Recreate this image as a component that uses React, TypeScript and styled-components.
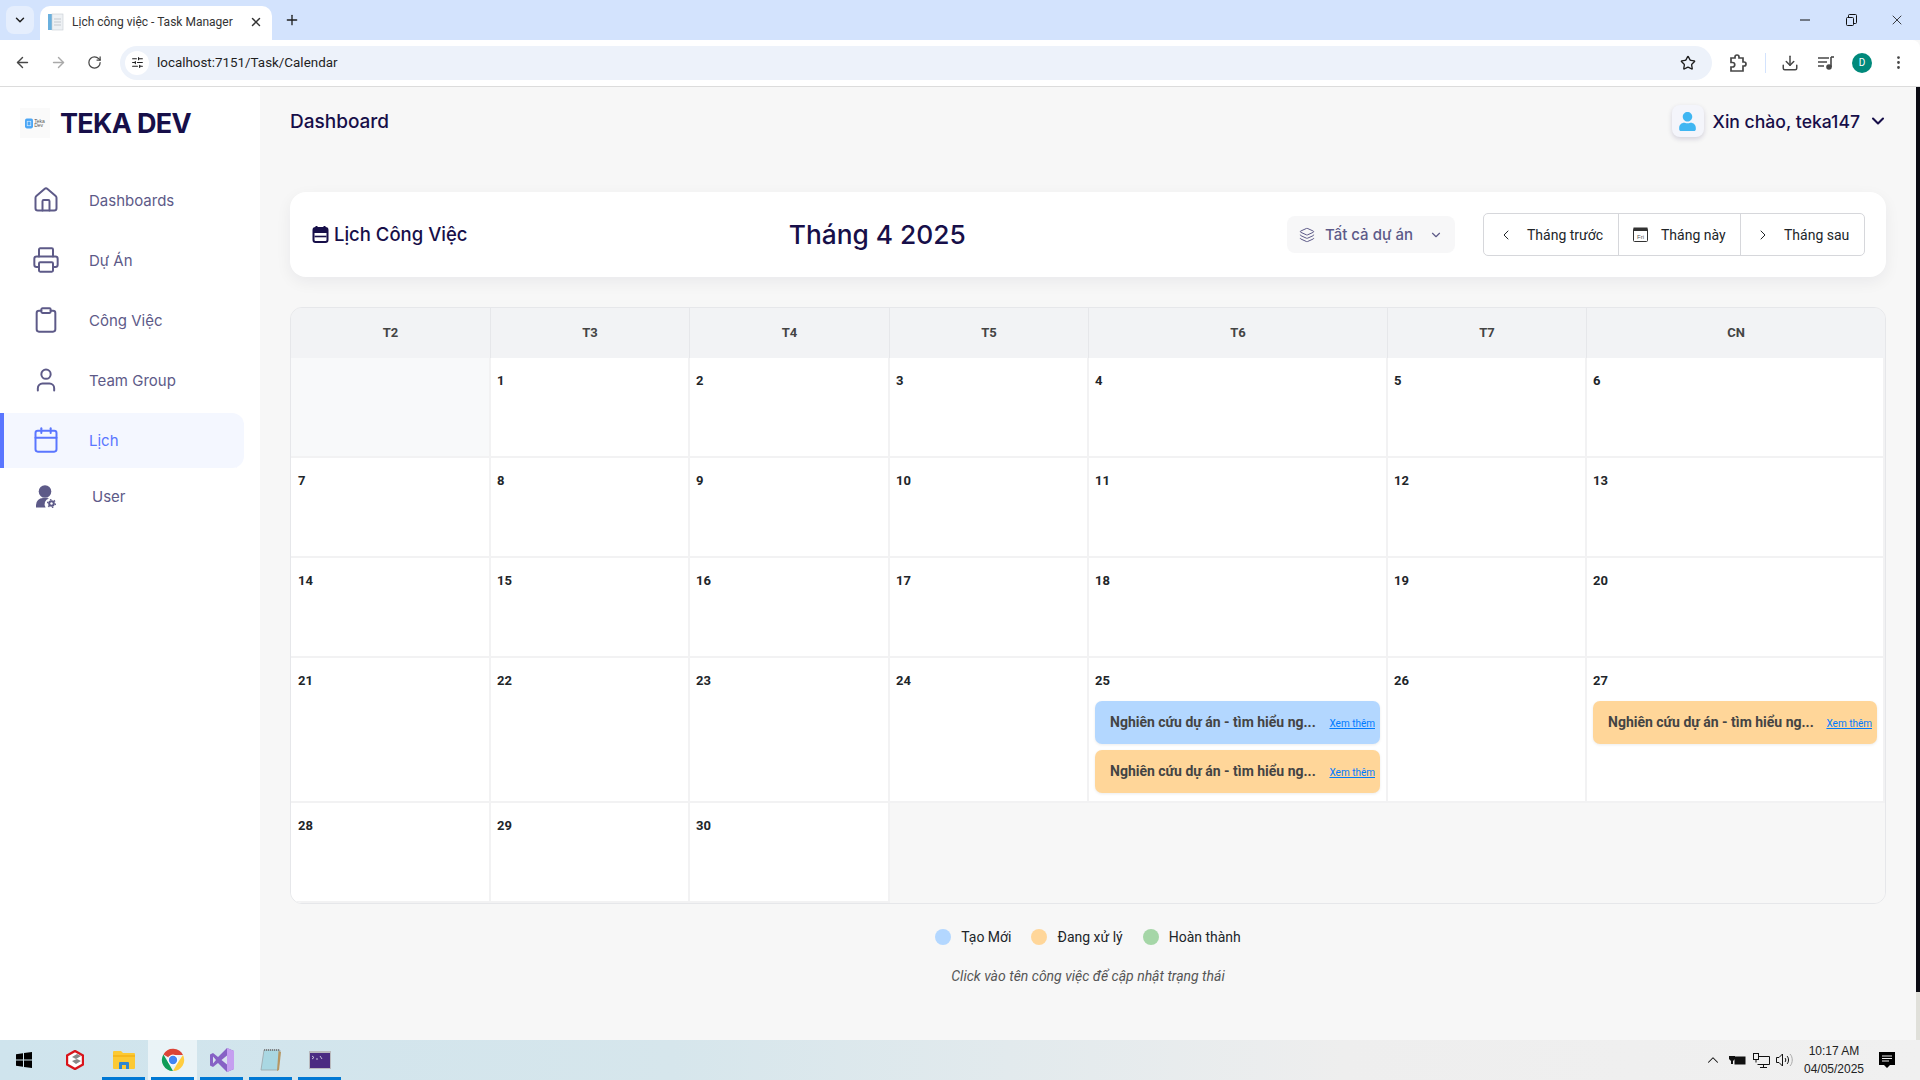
import React from "react";
import styled, { createGlobalStyle } from "styled-components";
import {
  ArrowLeft,
  ArrowRight,
  Calendar,
  ChevronDown,
  ChevronLeft,
  ChevronRight,
  ChevronUp,
  Clipboard,
  Download,
  House,
  Layers,
  MoreVertical,
  Plus,
  Printer,
  RotateCw,
  SlidersHorizontal,
  Star,
  User,
  X,
} from "lucide-react";
import { FaUser } from "react-icons/fa";

const GlobalStyle = createGlobalStyle`
  html, body {
    margin: 0;
    padding: 0;
    height: 100%;
    overflow: hidden;
  }
  * {
    box-sizing: border-box;
  }
  body {
    font-family: "Inter", "Liberation Sans", sans-serif;
  }
`;

const Screen = styled.div`
  width: 1920px;
  height: 1080px;
  display: flex;
  flex-direction: column;
  background: #f7f7f7;
`;

/* browser chrome */
const TabStrip = styled.div`
  height: 40px;
  flex: none;
  display: flex;
  align-items: flex-end;
  background: #d3e3fd;
  padding-left: 6px;
  color: #1f1f1f;
`;

const TabSearch = styled.div`
  width: 28px;
  height: 28px;
  margin: 0 6px 6px 0;
  border-radius: 8px;
  background: #e5eefd;
  display: flex;
  align-items: center;
  justify-content: center;
`;

const Tab = styled.div`
  width: 232px;
  height: 34px;
  background: #fff;
  border-radius: 10px 10px 0 0;
  display: flex;
  align-items: center;
  padding: 0 9px 2px 8px;
  font-family: "Roboto", sans-serif;
  font-size: 12px;
  color: #333;
  gap: 8px;
  span {
    flex: 1;
    white-space: nowrap;
  }
`;

const NewTab = styled.div`
  width: 40px;
  height: 34px;
  margin-bottom: 3px;
  display: flex;
  align-items: center;
  justify-content: center;
`;

const WindowControls = styled.div`
  margin-left: auto;
  height: 40px;
  display: flex;
  align-items: center;
`;

const WindowButton = styled.div`
  width: 46px;
  height: 40px;
  display: flex;
  align-items: center;
  justify-content: center;
`;

const Toolbar = styled.div`
  height: 47px;
  flex: none;
  background: #fff;
  border-bottom: 1px solid #dcdcdc;
  display: flex;
  align-items: center;
  color: #474747;
  padding: 0 0 1px 4px;
  border-top-right-radius: 8px;
`;

const ToolButton = styled.div<{ $muted?: boolean }>`
  width: 36px;
  height: 34px;
  flex: none;
  display: flex;
  align-items: center;
  justify-content: center;
  color: ${(p) => (p.$muted ? "#a9a9a9" : "#474747")};
`;

const Omnibox = styled.div`
  width: 1592px;
  height: 34px;
  flex: none;
  margin: 0 8px;
  border-radius: 17px;
  background: #edf2fa;
  display: flex;
  align-items: center;
  padding-left: 5px;
  font-family: "Roboto", sans-serif;
  font-size: 13.4px;
  color: #1f1f1f;
`;

const SiteTune = styled.div`
  width: 24px;
  height: 24px;
  border-radius: 50%;
  background: #fff;
  margin-right: 8px;
  display: flex;
  align-items: center;
  justify-content: center;
`;

const UrlText = styled.span`
  flex: 1;
`;

const StarSlot = styled.div`
  width: 20px;
  margin-right: 14px;
  display: flex;
  justify-content: center;
`;

const ToolDivider = styled.div`
  width: 1px;
  height: 20px;
  background: #d3e3fd;
  margin: 0 6px 0 9px;
  flex: none;
`;

const Avatar = styled.div`
  width: 20px;
  height: 20px;
  border-radius: 50%;
  background: #00897b;
  color: #fff;
  font-family: "Roboto", sans-serif;
  font-size: 10px;
  display: flex;
  align-items: center;
  justify-content: center;
`;

/* page */
const Page = styled.div`
  flex: 1;
  min-height: 0;
  display: flex;
`;

const Sidebar = styled.aside`
  width: 260px;
  flex: none;
  background: #fff;
  padding-top: 21px;
`;

const Brand = styled.div`
  height: 30px;
  margin: 0 0 34.5px 20px;
  display: flex;
  align-items: center;
  gap: 10px;
  font-size: 27px;
  font-weight: 700;
  letter-spacing: -0.7px;
  color: #170f49;
`;

const LogoBox = styled.div`
  width: 30px;
  height: 30px;
  background: #fafafa;
  display: flex;
  align-items: center;
  justify-content: center;
  gap: 1px;
`;

const LogoWord = styled.span`
  font-family: "Liberation Sans", sans-serif;
  font-size: 5px;
  line-height: 4.5px;
  font-weight: 400;
  letter-spacing: 0;
  color: #555;
`;

const Nav = styled.nav`
  display: flex;
  flex-direction: column;
  gap: 5px;
  padding-right: 16px;
`;

const NavItem = styled.div<{ $active?: boolean; $tight?: boolean }>`
  height: 55px;
  display: flex;
  align-items: center;
  gap: ${(p) => (p.$tight ? 36 : 29)}px;
  padding-left: ${(p) => (p.$tight ? 36 : 32)}px;
  font-size: 15px;
  color: ${(p) => (p.$active ? "#5a76ff" : "#5d5a88")};
  background: ${(p) => (p.$active ? "#f4f7ff" : "transparent")};
  border-radius: 0 12px 12px 0;
  box-shadow: ${(p) => (p.$active ? "inset 4px 0 0 #5a76ff" : "none")};
  margin-top: ${(p) => (p.$tight ? -4 : 0)}px;
  svg {
    flex: none;
  }
`;

const Main = styled.main`
  flex: 1;
  min-width: 0;
  padding: 0 30px;
`;

const TopBar = styled.header`
  height: 68px;
  margin-bottom: 37px;
  display: flex;
  align-items: center;
  justify-content: space-between;
  color: #170f49;
`;

const PageTitle = styled.h1`
  margin: 0;
  font-size: 19px;
  font-weight: 500;
`;

const UserMenu = styled.div`
  display: flex;
  align-items: center;
  font-size: 17.6px;
  font-weight: 500;
`;

const UserIcon = styled.div`
  width: 32px;
  height: 32px;
  margin-right: 9px;
  border-radius: 8px;
  background: #f4f5fb;
  box-shadow: 0 2px 5px rgba(23, 15, 73, 0.16);
  color: #3fb6f2;
  display: flex;
  align-items: center;
  justify-content: center;
`;

const UserChevron = styled.div`
  display: flex;
  margin: 0 -2px 0 8px;
`;

const Card = styled.section`
  height: 85px;
  border-radius: 16px;
  background: #fff;
  box-shadow: 0 5px 16px rgba(8, 15, 52, 0.06);
  padding: 0 21px 0 22px;
  display: flex;
  align-items: center;
  justify-content: space-between;
  color: #170f49;
`;

const CardTitle = styled.div`
  display: flex;
  align-items: center;
  gap: 5px;
  padding-bottom: 2px;
  font-size: 18.5px;
  font-weight: 500;
`;

const MonthTitle = styled.div`
  font-size: 26.3px;
  font-weight: 500;
`;

const CardActions = styled.div`
  display: flex;
  align-items: center;
  gap: 28px;
`;

const ProjectSelect = styled.div`
  width: 168px;
  height: 37px;
  border-radius: 8px;
  background: #f7f7f8;
  display: flex;
  align-items: center;
  padding-left: 12px;
  font-size: 15px;
  font-weight: 500;
  color: #5d5a88;
  span {
    flex: 1;
    margin-left: 10px;
    white-space: nowrap;
  }
  svg:last-child {
    margin-right: 12px;
  }
`;

const ButtonGroup = styled.div`
  height: 43px;
  display: flex;
  border: 1px solid #d6d7db;
  border-radius: 5px;
  font-family: "Roboto", sans-serif;
  font-size: 14px;
  color: #212529;
`;

const MonthButton = styled.div<{ $w: number }>`
  width: ${(p) => p.$w}px;
  display: flex;
  align-items: center;
  padding-left: 14px;
  gap: 13px;
  white-space: nowrap;
  & + & {
    border-left: 1px solid #d6d7db;
  }
`;

const CalendarGrid = styled.div`
  margin-top: 30px;
  display: grid;
  grid-template-columns: 200px 199px 200px 199px 299px 199px 1fr;
  border: 1px solid #e6e7ea;
  border-radius: 12px;
  overflow: hidden;
  font-family: "Roboto", sans-serif;
`;

const WeekDay = styled.div`
  height: 50px;
  padding-bottom: 1px;
  background: #f2f3f5;
  border-right: 1px solid #e6e7ea;
  display: flex;
  align-items: center;
  justify-content: center;
  font-size: 13px;
  font-weight: 700;
  color: #444;
  &:nth-child(7) {
    border-right: 0;
  }
`;

const Cell = styled.div<{ $empty?: boolean }>`
  min-height: 100px;
  padding: 15px 6px 8px;
  background: ${(p) => (p.$empty ? "#f8f9fa" : "#fff")};
  border-right: 2px solid #f2f2f3;
  border-bottom: 2px solid #f2f2f3;
  display: flex;
  flex-direction: column;
  gap: 6px;
  &:nth-child(7n + 1) {
    padding-left: 7px;
  }
`;

const DayNumber = styled.div`
  height: 22px;
  font-size: 13px;
  font-weight: 700;
  line-height: 15px;
  color: #212529;
`;

const TrailingSpace = styled.div`
  grid-column: span 4;
  background: #f7f7f7;
`;

const EventChip = styled.div<{ $color: string }>`
  height: 43px;
  border-radius: 7px;
  background: ${(p) => p.$color};
  box-shadow: 0 1px 3px rgba(0, 0, 0, 0.08);
  padding: 0 5px 2px 15px;
  display: flex;
  align-items: center;
  justify-content: space-between;
`;

const EventName = styled.span`
  font-size: 14px;
  font-weight: 700;
  color: #444;
  white-space: nowrap;
`;

const MoreLink = styled.a`
  margin-top: 3px;
  font-size: 10px;
  color: #007bff;
  text-decoration: underline;
  white-space: nowrap;
`;

const Legend = styled.div`
  margin-top: 23px;
  display: flex;
  justify-content: center;
  gap: 20px;
  font-family: "Roboto", sans-serif;
  font-size: 14px;
  line-height: 20px;
  color: #212529;
`;

const LegendItem = styled.div`
  display: flex;
  align-items: center;
  gap: 10px;
`;

const LegendDot = styled.span<{ $color: string }>`
  width: 16px;
  height: 16px;
  border-radius: 50%;
  background: ${(p) => p.$color};
`;

const Hint = styled.p`
  margin: 19px 0 0;
  text-align: center;
  font-family: "Roboto", sans-serif;
  font-size: 14px;
  font-style: italic;
  line-height: 20px;
  color: #555;
`;

const ScrollTrack = styled.div`
  width: 4px;
  flex: none;
  background: #e0e0da;
`;

const ScrollThumb = styled.div`
  height: 905px;
  background: #0c0c14;
`;

/* taskbar */
const Taskbar = styled.footer`
  height: 40px;
  flex: none;
  display: flex;
  align-items: center;
  background: linear-gradient(90deg, #cfe4ed 0%, #d6e6ec 35%, #eeeeee 70%, #f0f0f0 100%);
  color: #111;
`;

const StartSlot = styled.div`
  width: 50px;
  height: 40px;
  flex: none;
  padding-right: 2px;
  display: flex;
  align-items: center;
  justify-content: center;
`;

const TaskSlot = styled.div<{ $open?: boolean; $active?: boolean }>`
  width: 49px;
  height: 40px;
  flex: none;
  display: flex;
  align-items: center;
  justify-content: center;
  background: ${(p) => (p.$active ? "rgba(255,255,255,0.55)" : "transparent")};
  border-bottom: 3px solid transparent;
  border-image: ${(p) =>
    p.$open
      ? "linear-gradient(90deg, transparent 4px, #0078d4 4px, #0078d4 calc(100% - 4px), transparent calc(100% - 4px)) 1"
      : "none"};
  padding-top: 3px;
`;

const Tray = styled.div`
  margin-left: auto;
  display: flex;
  align-items: center;
  height: 40px;
`;

const TrayIcon = styled.div`
  width: 24px;
  display: flex;
  justify-content: center;
`;

const Clock = styled.div`
  width: 72px;
  margin: 0 9px 0 1px;
  text-align: center;
  font-family: "Liberation Sans", sans-serif;
  font-size: 12px;
  line-height: 18px;
  color: #222;
`;

const NotifySlot = styled.div`
  width: 41px;
  display: flex;
  justify-content: flex-start;
`;

const weekDays = ["T2", "T3", "T4", "T5", "T6", "T7", "CN"];

const BLUE = "#b3d7ff";
const ORANGE = "#ffd699";
const GREEN = "#a5d6a7";

const eventsByDay: Record<number, string[]> = {
  25: [BLUE, ORANGE],
  27: [ORANGE],
};

const navItems = [
  { label: "Dashboards", icon: <House size={28} strokeWidth={1.7} /> },
  { label: "Dự Án", icon: <Printer size={28} strokeWidth={1.7} /> },
  { label: "Công Việc", icon: <Clipboard size={28} strokeWidth={1.7} /> },
  { label: "Team Group", icon: <User size={28} strokeWidth={1.7} /> },
];

const FileFavicon = () => (
  <svg width="16" height="18" viewBox="0 0 16 18">
    <rect x="0" y="1" width="4" height="16" fill="#6ab0de" />
    <rect x="4" y="1" width="11" height="16" fill="#eef1f4" stroke="#c7ccd2" strokeWidth="0.6" />
    <path d="M6 6h7M6 9h7M6 12h7" stroke="#c4c9cf" />
  </svg>
);

const RestoreIcon = () => (
  <svg width="12" height="12" viewBox="0 0 12 12" fill="none" stroke="#111">
    <rect x="1.5" y="3.5" width="7" height="8" rx="1" />
    <path d="M3.5 3.5V1.5a1 1 0 0 1 1-1h6a1 1 0 0 1 1 1v7a1 1 0 0 1-1 1h-2" />
  </svg>
);

const ExtensionIcon = () => (
  <svg width="18" height="18" viewBox="0 0 18 18" fill="none" stroke="#474747" strokeWidth="1.7">
    <path d="M2 4h4V3a2 2 0 0 1 4 0v1h4v4h1a2 2 0 0 1 0 4h-1v5H2v-4h1.5a1.5 1.5 0 0 0 0-4.5H2z" />
  </svg>
);

const MediaIcon = () => (
  <svg width="18" height="16" viewBox="0 0 18 16" fill="none" stroke="#474747" strokeWidth="1.6">
    <path d="M1 3h11M1 7h9M1 11h6" />
    <path d="M14 2v10" />
    <circle cx="12" cy="12" r="2" fill="#474747" />
    <path d="M14 2h3" />
  </svg>
);

const LogoMark = () => (
  <svg width="8" height="11" viewBox="0 0 9 11">
    <rect width="9" height="11" rx="2" fill="#4ba6f5" />
    <rect x="2.5" y="3" width="4" height="5" fill="none" stroke="#d6ecff" strokeWidth="0.8" />
  </svg>
);

const UserGearIcon = () => (
  <svg width="20" height="23" viewBox="0 0 20 23" fill="#5d5a88">
    <circle cx="9" cy="6.5" r="6.3" />
    <path d="M0 22.500V20a7 7 0 0 1 7-7h4a6 6 0 0 1 2 .4A6 6 0 0 0 9.600 22.500z" />
    <circle cx="15.500" cy="18.500" r="3.300" />
    <circle cx="15.500" cy="18.500" r="3.900" fill="none" stroke="#5d5a88" strokeWidth="1.400" strokeDasharray="1.500 2.580" />
    <circle cx="15.500" cy="18.500" r="1.200" fill="#fff" />
  </svg>
);

const CalendarSmall = () => (
  <svg width="17" height="18" viewBox="0 0 16 18" fill="none">
    <path d="M4 1v3M12 1v3" stroke="#170f49" strokeWidth="2" />
    <rect x="1" y="3" width="14" height="14" rx="2" stroke="#170f49" strokeWidth="2" />
    <rect x="1" y="3" width="14" height="5" fill="#170f49" />
    <path d="M2 11.5h12" stroke="#170f49" strokeWidth="1.6" />
  </svg>
);

const FriCalendar = () => (
  <svg width="15" height="15" viewBox="0 0 15 15">
    <rect x="0.5" y="1.5" width="14" height="13" rx="1" fill="#fff" stroke="#333" />
    <rect x="0.5" y="0.5" width="14" height="3.5" fill="#333" />
    <text x="7.5" y="11.5" fontSize="6" textAnchor="middle" fill="#555" fontFamily="Liberation Sans">
      Fri
    </text>
  </svg>
);

const WindowsLogo = () => (
  <svg width="16" height="16" viewBox="0 0 16 16" fill="#000">
    <path d="M0 2.2 7 1.2v6.4H0zM8 1 16 0v7.6H8zM0 8.4h7v6.4l-7-1zM8 8.4h8V16l-8-1.1z" />
  </svg>
);

const RedAppIcon = () => (
  <svg width="18" height="20" viewBox="0 0 18 20">
    <path d="M9 1 17 5.5v9L9 19 1 14.5v-9z" fill="#fff" stroke="#d8141b" strokeWidth="2.4" />
    <path d="M6 7l5-3 4 2-5 3zM6 11l5-2 4 2-5 3z" fill="#888" />
  </svg>
);

const FolderIcon = () => (
  <svg width="22" height="20" viewBox="0 0 22 20">
    <path d="M0 2a1 1 0 0 1 1-1h7l2 2h11a1 1 0 0 1 1 1v14a1 1 0 0 1-1 1H1a1 1 0 0 1-1-1z" fill="#fcc934" />
    <path d="M0 5h22v2H0z" fill="#f5b81f" />
    <path d="M6 19v-6a1 1 0 0 1 1-1h8a1 1 0 0 1 1 1v6h-3v-4H9v4z" fill="#2f86d3" />
  </svg>
);

const ChromeIcon = () => (
  <svg width="24" height="24" viewBox="0 0 24 24">
    <path d="M12 12 2.4 6.5A11 11 0 0 1 22 7H12z" fill="#db4437" />
    <path d="M12 23A11 11 0 0 1 2.4 6.5L7.5 15z" fill="#0f9d58" />
    <path d="M22 7A11 11 0 0 1 12 23l4.6-8z" fill="#ffcd40" />
    <circle cx="12" cy="12" r="5.4" fill="#fff" />
    <circle cx="12" cy="12" r="4.2" fill="#4285f4" />
  </svg>
);

const VisualStudioIcon = () => (
  <svg width="24" height="24" viewBox="0 0 24 24">
    <path d="M17 0 24 3v18l-7 3-9-9-5 4-3-1.5v-11L3 5l5 4z" fill="#8661c5" />
    <path d="M17 0 24 3v18l-7 3z" fill="#c59ff0" />
    <path d="M3 8.5v7L6 12zM17 7.5 11.5 12l5.5 4.5z" fill="#d9e4ee" />
  </svg>
);

const NotepadIcon = () => (
  <svg width="24" height="24" viewBox="0 0 24 24">
    <path d="M5 2h16l-2 20H2z" fill="#a9d7e2" stroke="#9aa5a8" strokeWidth="0.8" />
    <path d="M19.5 3 22 4l-2 18-2 1z" fill="#b69662" />
    <path d="M5 2h16" stroke="#6d6d6d" strokeWidth="1.6" strokeDasharray="1 1" />
  </svg>
);

const TerminalIcon = () => (
  <svg width="22" height="18" viewBox="0 0 22 18">
    <rect width="22" height="18" fill="#b9b9bd" />
    <rect x="1" y="2" width="20" height="15" fill="#4b2c82" />
    <path d="M3 5l2 1.5L3 8M7 8h2M11 5l2 3" stroke="#d4d0e4" strokeWidth="0.9" fill="none" />
  </svg>
);

const BatteryIcon = () => (
  <svg width="17" height="12" viewBox="0 0 17 12" fill="#111">
    <path d="M2 0v2M4 0v2M0 2h6v3L4 7v3H2V7L0 5z" />
    <rect x="6" y="3" width="10" height="7" stroke="#111" fill="#111" />
  </svg>
);

const NetworkIcon = () => (
  <svg width="17" height="15" viewBox="0 0 17 15" fill="none" stroke="#111">
    <path d="M4.5 3.5h12v8h-12M10.5 11.5v3M7 14.5h7" />
    <rect x="0.5" y="0.5" width="5" height="6" fill="#f0f0f0" />
    <path d="M3 6.5v3" />
  </svg>
);

const VolumeIcon = () => (
  <svg width="18" height="14" viewBox="0 0 18 14" fill="none" stroke="#111">
    <path d="M0.5 4.5h2.5l3.5-3.5v12l-3.5-3.5H0.5z" />
    <path d="M9 5c1 1 1 3 0 4M11 3c2 2 2 6 0 8" />
    <path d="M14 1c3 3 3 9 0 12" stroke="#aaa" />
  </svg>
);

const NotifyIcon = () => (
  <svg width="16" height="16" viewBox="0 0 16 16">
    <path d="M0 0h16v13h-5l-3 3-3-3H0z" fill="#000" />
    <path d="M3 4h10M3 6.5h10M3 9h7" stroke="#f0f0f0" />
  </svg>
);

const renderDay = (day: number) => (
  <Cell key={day}>
    <DayNumber>{day}</DayNumber>
    {(eventsByDay[day] ?? []).map((color, i) => (
      <EventChip key={i} $color={color}>
        <EventName>Nghiên cứu dự án - tìm hiểu ng...</EventName>
        <MoreLink>Xem thêm</MoreLink>
      </EventChip>
    ))}
  </Cell>
);

const App = () => {
  const days = Array.from({ length: 30 }, (_, i) => i + 1);

  return (
    <Screen>
      <GlobalStyle />
      <TabStrip>
        <TabSearch>
          <ChevronDown size={14} strokeWidth={2.5} />
        </TabSearch>
        <Tab>
          <FileFavicon />
          <span>Lịch công việc - Task Manager</span>
          <X size={14} strokeWidth={2.5} />
        </Tab>
        <NewTab>
          <Plus size={16} strokeWidth={2} />
        </NewTab>
        <WindowControls>
          <WindowButton>
            <svg width="10" height="2" viewBox="0 0 10 2">
              <path d="M0 1h10" stroke="#111" />
            </svg>
          </WindowButton>
          <WindowButton>
            <RestoreIcon />
          </WindowButton>
          <WindowButton>
            <X size={16} strokeWidth={1.2} color="#111" />
          </WindowButton>
        </WindowControls>
      </TabStrip>

      <Toolbar>
        <ToolButton>
          <ArrowLeft size={17} />
        </ToolButton>
        <ToolButton $muted>
          <ArrowRight size={17} />
        </ToolButton>
        <ToolButton>
          <RotateCw size={15} />
        </ToolButton>
        <Omnibox>
          <SiteTune>
            <SlidersHorizontal size={13} />
          </SiteTune>
          <UrlText>localhost:7151/Task/Calendar</UrlText>
          <StarSlot>
            <Star size={16} strokeWidth={2} />
          </StarSlot>
        </Omnibox>
        <ToolButton>
          <ExtensionIcon />
        </ToolButton>
        <ToolDivider />
        <ToolButton>
          <Download size={18} />
        </ToolButton>
        <ToolButton>
          <MediaIcon />
        </ToolButton>
        <ToolButton>
          <Avatar>D</Avatar>
        </ToolButton>
        <ToolButton>
          <MoreVertical size={17} />
        </ToolButton>
      </Toolbar>

      <Page>
        <Sidebar>
          <Brand>
            <LogoBox>
              <LogoMark />
              <LogoWord>
                Teka
                <br />
                Dev
              </LogoWord>
            </LogoBox>
            TEKA DEV
          </Brand>
          <Nav>
            {navItems.map((item) => (
              <NavItem key={item.label}>
                {item.icon}
                {item.label}
              </NavItem>
            ))}
            <NavItem $active>
              <Calendar size={28} strokeWidth={1.7} />
              Lịch
            </NavItem>
            <NavItem $tight>
              <UserGearIcon />
              User
            </NavItem>
          </Nav>
        </Sidebar>

        <Main>
          <TopBar>
            <PageTitle>Dashboard</PageTitle>
            <UserMenu>
              <UserIcon>
                <FaUser size={19} />
              </UserIcon>
              Xin chào, teka147
              <UserChevron>
                <ChevronDown size={20} strokeWidth={2.5} />
              </UserChevron>
            </UserMenu>
          </TopBar>

          <Card>
            <CardTitle>
              <CalendarSmall />
              Lịch Công Việc
            </CardTitle>
            <MonthTitle>Tháng 4 2025</MonthTitle>
            <CardActions>
              <ProjectSelect>
                <Layers size={16} strokeWidth={1.5} />
                <span>Tất cả dự án</span>
                <ChevronDown size={14} strokeWidth={2} />
              </ProjectSelect>
              <ButtonGroup>
                <MonthButton $w={134}>
                  <ChevronLeft size={16} strokeWidth={1.5} />
                  Tháng trước
                </MonthButton>
                <MonthButton $w={122}>
                  <FriCalendar />
                  Tháng này
                </MonthButton>
                <MonthButton $w={124}>
                  <ChevronRight size={16} strokeWidth={1.5} />
                  Tháng sau
                </MonthButton>
              </ButtonGroup>
            </CardActions>
          </Card>

          <CalendarGrid>
            {weekDays.map((d) => (
              <WeekDay key={d}>{d}</WeekDay>
            ))}
            <Cell $empty />
            {days.map(renderDay)}
            <TrailingSpace />
          </CalendarGrid>

          <Legend>
            <LegendItem>
              <LegendDot $color={BLUE} />
              Tạo Mới
            </LegendItem>
            <LegendItem>
              <LegendDot $color={ORANGE} />
              Đang xử lý
            </LegendItem>
            <LegendItem>
              <LegendDot $color={GREEN} />
              Hoàn thành
            </LegendItem>
          </Legend>
          <Hint>Click vào tên công việc để cập nhật trạng thái</Hint>
        </Main>
        <ScrollTrack>
          <ScrollThumb />
        </ScrollTrack>
      </Page>

      <Taskbar>
        <StartSlot>
          <WindowsLogo />
        </StartSlot>
        <TaskSlot>
          <RedAppIcon />
        </TaskSlot>
        <TaskSlot $open>
          <FolderIcon />
        </TaskSlot>
        <TaskSlot $open $active>
          <ChromeIcon />
        </TaskSlot>
        <TaskSlot $open>
          <VisualStudioIcon />
        </TaskSlot>
        <TaskSlot $open>
          <NotepadIcon />
        </TaskSlot>
        <TaskSlot $open>
          <TerminalIcon />
        </TaskSlot>
        <Tray>
          <TrayIcon>
            <ChevronUp size={18} strokeWidth={1.4} />
          </TrayIcon>
          <TrayIcon>
            <BatteryIcon />
          </TrayIcon>
          <TrayIcon>
            <NetworkIcon />
          </TrayIcon>
          <TrayIcon>
            <VolumeIcon />
          </TrayIcon>
          <Clock>
            10:17 AM
            <br />
            04/05/2025
          </Clock>
          <NotifySlot>
            <NotifyIcon />
          </NotifySlot>
        </Tray>
      </Taskbar>
    </Screen>
  );
};

export default App;
